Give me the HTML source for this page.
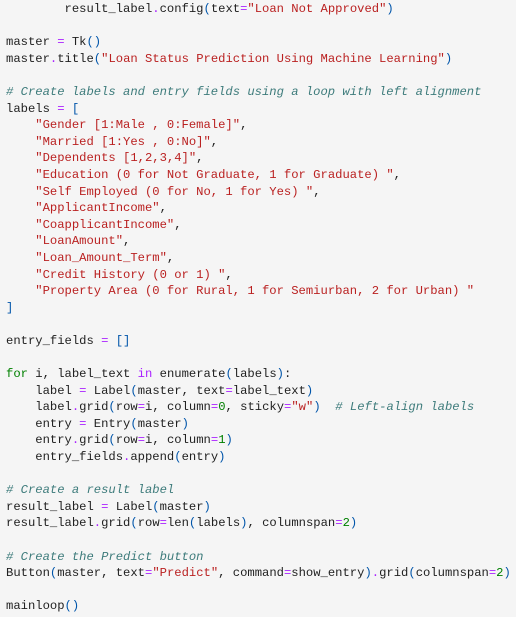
<!DOCTYPE html>
<html><head><meta charset="utf-8"><style>
html,body{margin:0;padding:0;background:#f5f5f5;width:516px;height:617px;overflow:hidden}
pre{margin:0;padding:1px 0 0 6px;font-family:"Liberation Mono",monospace;font-size:12.2px;line-height:16.6px;color:#212121;white-space:pre}
.s{color:#ba2121}.c{color:#3d7b7b;font-style:italic}.o{color:#aa22ff}.k{color:#008000}.b{color:#0055aa}.n{color:#008000}.w{color:#aa22ff}
</style></head><body><pre>        result_label<span class="o">.</span>config<span class="b">(</span>text<span class="o">=</span><span class="s">"Loan Not Approved"</span><span class="b">)</span>

master <span class="o">=</span> Tk<span class="b">()</span>
master<span class="o">.</span>title<span class="b">(</span><span class="s">"Loan Status Prediction Using Machine Learning"</span><span class="b">)</span>

<span class="c"># Create labels and entry fields using a loop with left alignment</span>
labels <span class="o">=</span> <span class="b">[</span>
    <span class="s">"Gender [1:Male , 0:Female]"</span>,
    <span class="s">"Married [1:Yes , 0:No]"</span>,
    <span class="s">"Dependents [1,2,3,4]"</span>,
    <span class="s">"Education (0 for Not Graduate, 1 for Graduate) "</span>,
    <span class="s">"Self Employed (0 for No, 1 for Yes) "</span>,
    <span class="s">"ApplicantIncome"</span>,
    <span class="s">"CoapplicantIncome"</span>,
    <span class="s">"LoanAmount"</span>,
    <span class="s">"Loan_Amount_Term"</span>,
    <span class="s">"Credit History (0 or 1) "</span>,
    <span class="s">"Property Area (0 for Rural, 1 for Semiurban, 2 for Urban) "</span>
<span class="b">]</span>

entry_fields <span class="o">=</span> <span class="b">[]</span>

<span class="k">for</span> i, label_text <span class="w">in</span> enumerate<span class="b">(</span>labels<span class="b">)</span>:
    label <span class="o">=</span> Label<span class="b">(</span>master, text<span class="o">=</span>label_text<span class="b">)</span>
    label<span class="o">.</span>grid<span class="b">(</span>row<span class="o">=</span>i, column<span class="o">=</span><span class="n">0</span>, sticky<span class="o">=</span><span class="s">"w"</span><span class="b">)</span>  <span class="c"># Left-align labels</span>
    entry <span class="o">=</span> Entry<span class="b">(</span>master<span class="b">)</span>
    entry<span class="o">.</span>grid<span class="b">(</span>row<span class="o">=</span>i, column<span class="o">=</span><span class="n">1</span><span class="b">)</span>
    entry_fields<span class="o">.</span>append<span class="b">(</span>entry<span class="b">)</span>

<span class="c"># Create a result label</span>
result_label <span class="o">=</span> Label<span class="b">(</span>master<span class="b">)</span>
result_label<span class="o">.</span>grid<span class="b">(</span>row<span class="o">=</span>len<span class="b">(</span>labels<span class="b">)</span>, columnspan<span class="o">=</span><span class="n">2</span><span class="b">)</span>

<span class="c"># Create the Predict button</span>
Button<span class="b">(</span>master, text<span class="o">=</span><span class="s">"Predict"</span>, command<span class="o">=</span>show_entry<span class="b">)</span><span class="o">.</span>grid<span class="b">(</span>columnspan<span class="o">=</span><span class="n">2</span><span class="b">)</span>

mainloop<span class="b">()</span>
</pre></body></html>
